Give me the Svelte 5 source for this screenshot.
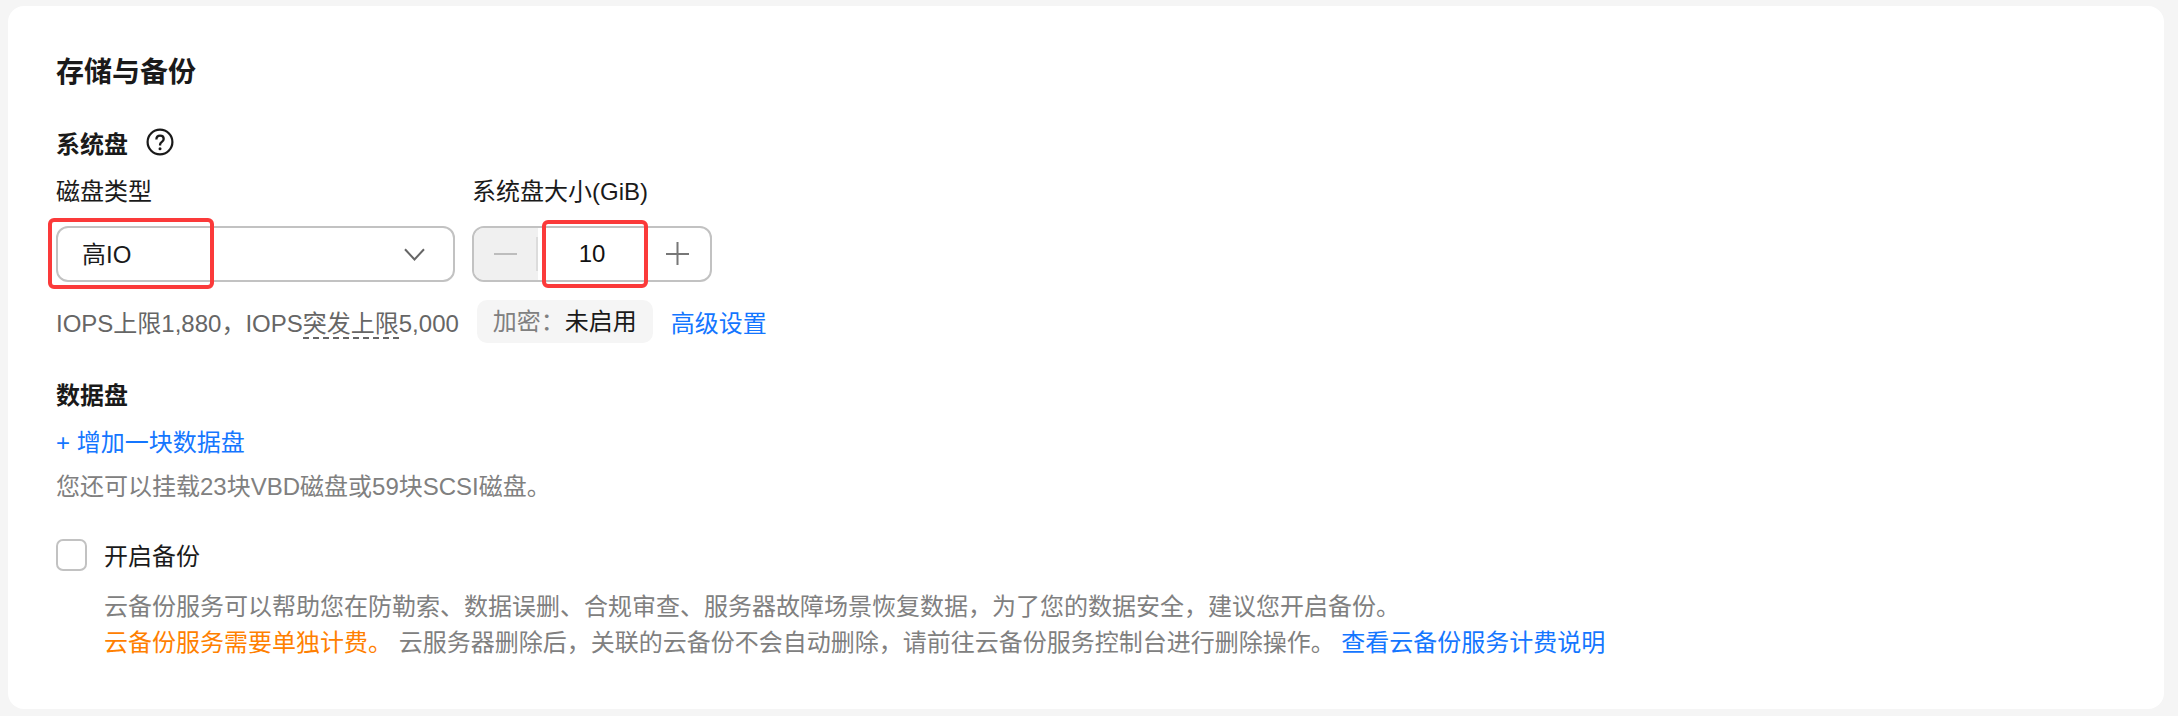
<script lang="ts">
	let checked = $state(false);
	let size = $state(10);
</script>

<div class="page">
	<section class="card">
		<h2 class="title">存储与备份</h2>

		<div class="sub-title sys-title">
			<span>系统盘</span>
			<svg class="help" viewBox="0 0 28 28" width="28" height="28" aria-hidden="true">
				<circle cx="14" cy="14" r="12.4" fill="none" stroke="#1a1a1a" stroke-width="2.2" />
				<path d="M10.4 11.4c0-2.2 1.6-3.7 3.7-3.7s3.6 1.4 3.6 3.2c0 1.6-1 2.4-2.1 3.2-.9.7-1.5 1.3-1.5 2.5v.8" fill="none" stroke="#1a1a1a" stroke-width="2.3" />
				<circle cx="14" cy="20.8" r="1.5" fill="#1a1a1a" />
			</svg>
		</div>

		<div class="fields">
			<div class="field">
				<div class="label">磁盘类型</div>
				<div class="select mark-host">
					<span class="select-text">高IO</span>
					<svg class="chevron" viewBox="0 0 21 13" width="21" height="13" aria-hidden="true">
						<path d="M1 1.2 10.5 11.5 20 1.2" fill="none" stroke="#666" stroke-width="2" />
					</svg>
					<i class="mark mark-select"></i>
				</div>
			</div>
			<div class="field">
				<div class="label">系统盘大小(GiB)</div>
				<div class="stepper mark-host">
					<button class="step minus" disabled aria-label="减少">
						<svg viewBox="0 0 24 24" width="24" height="24" aria-hidden="true"><path d="M0 12h23" stroke="#bdbdbd" stroke-width="2" /></svg>
					</button>
					<div class="value">{size}</div>
					<button class="step plus" aria-label="增加">
						<svg viewBox="0 0 24 24" width="24" height="24" aria-hidden="true"><path d="M0 12h23M11.5 0v23" stroke="#777" stroke-width="2" /></svg>
					</button>
					<i class="mark mark-value"></i>
				</div>
			</div>
		</div>

		<div class="hint-row">
			<span class="iops">IOPS上限1,880，IOPS<span class="dashed">突发上限</span>5,000</span>
			<span class="chip"><span class="chip-key">加密：</span>未启用</span>
			<a class="link" href="#advanced">高级设置</a>
		</div>

		<div class="sub-title data-title"><span>数据盘</span></div>
		<a class="link add" href="#add">+ 增加一块数据盘</a>
		<p class="muted quota">您还可以挂载23块VBD磁盘或59块SCSI磁盘。</p>

		<label class="check">
			<input type="checkbox" bind:checked />
			<span class="box"></span>
			<span class="check-text">开启备份</span>
		</label>

		<div class="desc">
			<p>云备份服务可以帮助您在防勒索、数据误删、合规审查、服务器故障场景恢复数据，为了您的数据安全，建议您开启备份。</p>
			<p><span class="warn">云备份服务需要单独计费。</span> 云服务器删除后，关联的云备份不会自动删除，请前往云备份服务控制台进行删除操作。 <a class="link" href="#billing">查看云备份服务计费说明</a></p>
		</div>
	</section>
</div>

<style>
	:global(body) {
		margin: 0;
		background: #f5f5f5;
	}

	.page {
		padding: 6px 14px 7px 8px;
		font-family: "Liberation Sans", "Noto Sans CJK SC", sans-serif;
		font-size: 24px;
		color: #1a1a1a;
	}

	.card {
		height: 703px;
		box-sizing: border-box;
		padding: 50px 48px 0;
		background: #fff;
		border-radius: 16px;
	}

	.title {
		margin: 0;
		font-size: 28px;
		line-height: 34px;
		font-weight: 700;
	}

	.sub-title {
		display: flex;
		align-items: center;
		gap: 18px;
		height: 28px;
		font-weight: 700;
	}

	.sys-title {
		margin-top: 38px;
	}

	.fields {
		display: flex;
		gap: 17px;
		margin-top: 20px;
	}

	.label {
		line-height: 32px;
	}

	.select,
	.stepper {
		position: relative;
		box-sizing: border-box;
		display: flex;
		align-items: center;
		height: 56px;
		margin-top: 18px;
		border: 2px solid #c2c2c2;
		border-radius: 12px;
	}

	.select {
		width: 399px;
		justify-content: space-between;
		padding: 0 28px 0 24px;
	}

	.select-text {
		margin-top: -3px;
	}

	.stepper {
		width: 240px;
	}

	.step {
		position: relative;
		display: flex;
		align-items: center;
		justify-content: center;
		height: 100%;
		padding: 0;
		border: 0;
		background: none;
	}

	.minus {
		width: 64px;
		border-radius: 10px 0 0 10px;
		background: #f0f0f0;
	}

	.minus::after {
		content: "";
		position: absolute;
		right: 0;
		top: 9px;
		bottom: 9px;
		width: 2px;
		background: #dcdcdc;
	}

	.plus {
		width: 64px;
	}

	.value {
		flex: 1;
		text-align: center;
		color: #111;
	}

	.mark {
		position: absolute;
		border: 4px solid #fb3a3a;
		border-radius: 6px;
		pointer-events: none;
	}

	.mark-select {
		left: -10px;
		top: -10px;
		width: 158px;
		height: 63px;
	}

	.mark-value {
		left: 68px;
		top: -8px;
		width: 98px;
		height: 60px;
	}

	.hint-row {
		display: flex;
		align-items: center;
		height: 43px;
		margin-top: 18px;
	}

	.iops {
		color: #666;
	}

	.dashed {
		border-bottom: 2px dashed #666;
	}

	.chip {
		box-sizing: border-box;
		height: 43px;
		margin-left: 18px;
		padding: 0 16px;
		line-height: 43px;
		border-radius: 10px;
		background: #f5f5f5;
	}

	.chip-key {
		color: #808080;
	}

	.hint-row .link {
		margin-left: 18px;
	}

	.link {
		color: #1476ff;
		text-decoration: none;
	}

	.data-title {
		margin-top: 36px;
	}

	.add {
		display: block;
		margin-top: 19px;
		line-height: 34px;
	}

	.muted {
		color: #808080;
	}

	.quota {
		margin: 10px 0 0;
		line-height: 34px;
	}

	.check {
		display: flex;
		align-items: center;
		gap: 17px;
		height: 32px;
		margin-top: 35px;
	}

	.check input {
		position: absolute;
		opacity: 0;
		pointer-events: none;
	}

	.check-text {
		margin-top: -2px;
	}

	.box {
		box-sizing: border-box;
		width: 31px;
		height: 32px;
		border: 2px solid #c2c2c2;
		border-radius: 7px;
	}

	.desc {
		margin-top: 18px;
		padding-left: 48px;
		color: #808080;
		line-height: 36px;
	}

	.desc p {
		margin: 0;
	}

	.warn {
		color: #ff8000;
	}
</style>
